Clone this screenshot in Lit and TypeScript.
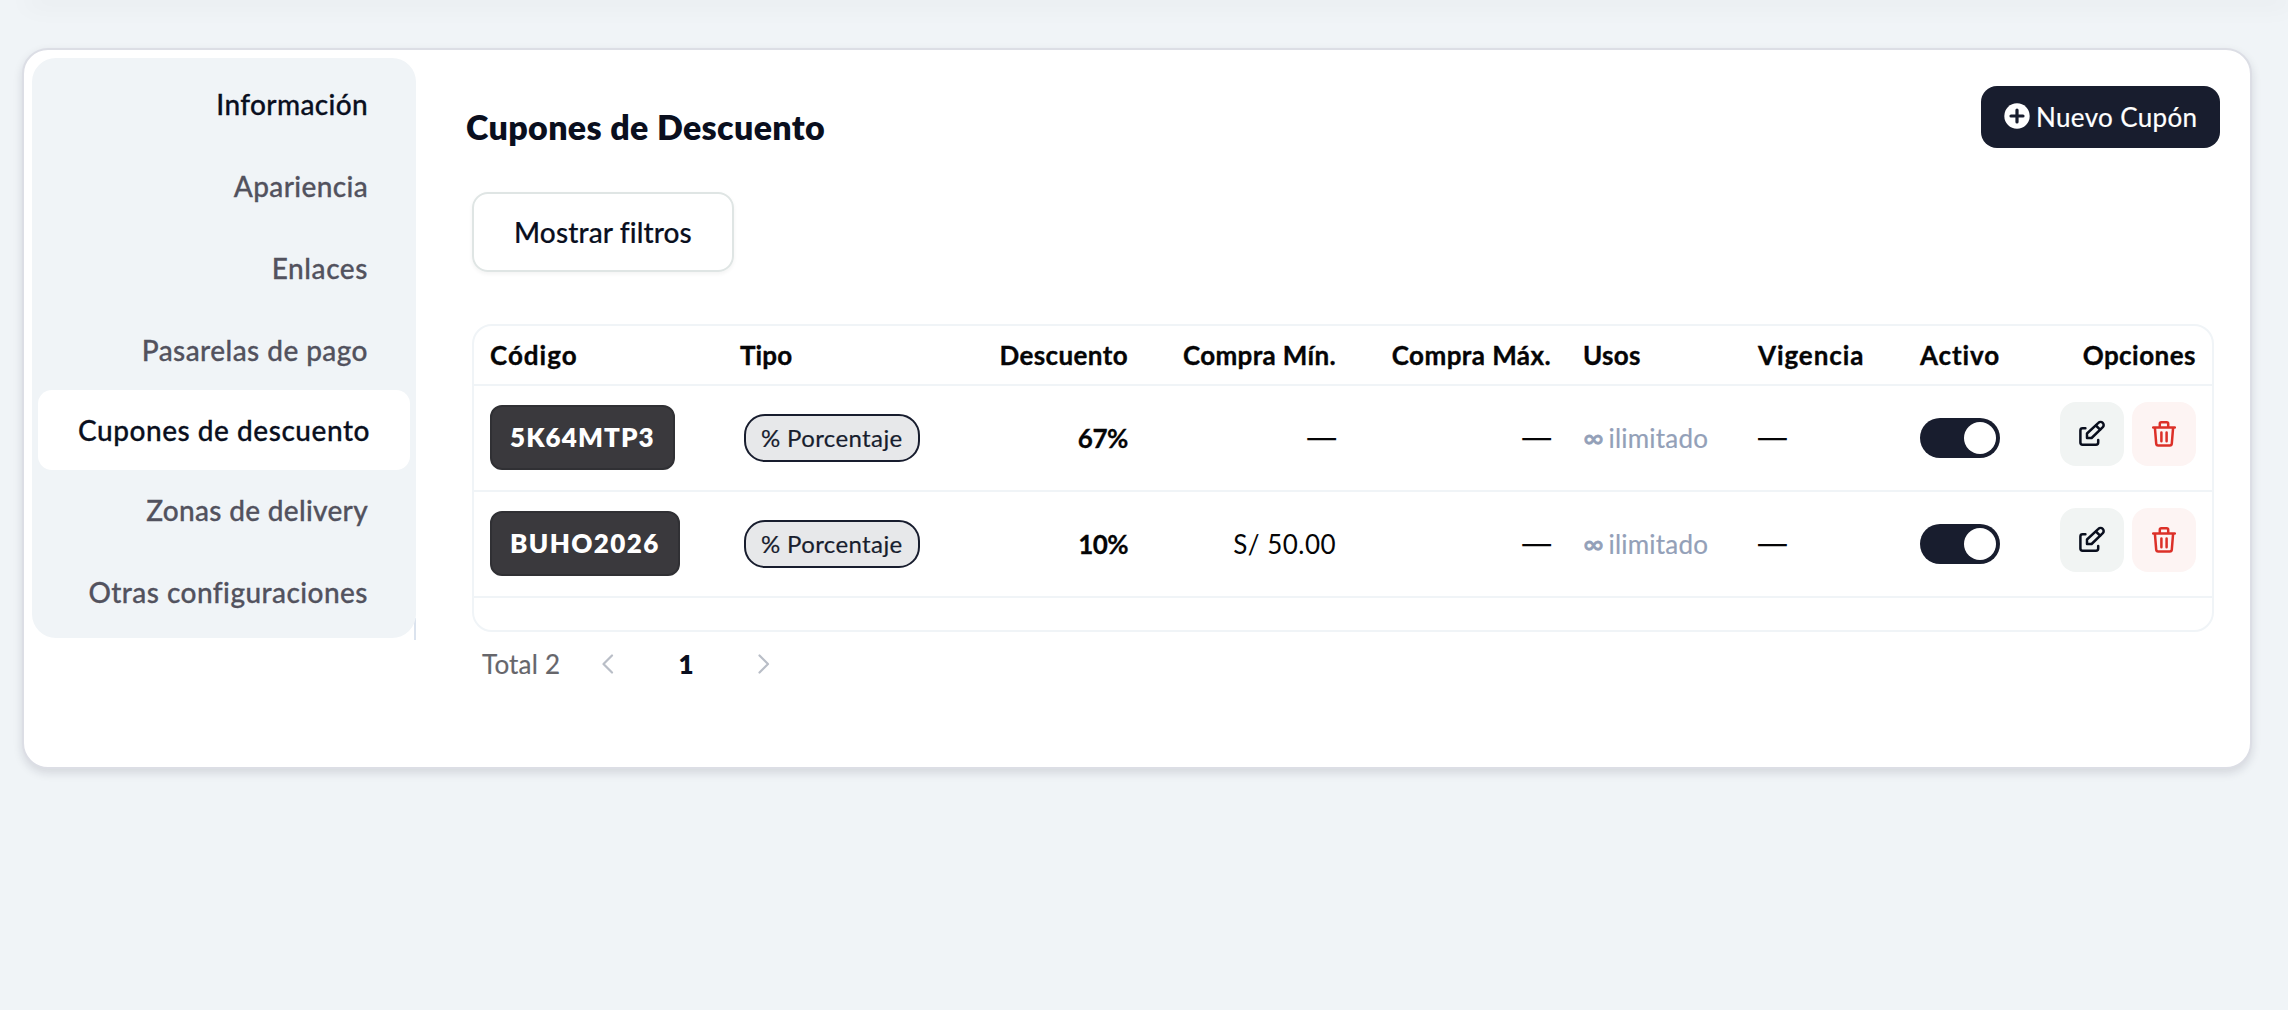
import { LitElement, html, css } from 'lit';
import { customElement, property } from 'lit/decorators.js';
import { classMap } from 'lit/directives/class-map.js';
import { styleMap } from 'lit/directives/style-map.js';

interface Label {
  text: string;
  /** Letter spacing in pixels. */
  track: number;
}

interface Coupon {
  code: Label;
  discount: Label;
  min?: string;
}

const label = ({ text, track }: Label) =>
  html`<span style=${styleMap({ letterSpacing: `${track}px` })}>${text}</span>`;

const NAV: Array<Label & { state?: 'strong' | 'active' }> = [
  { text: 'Información', track: 0.36, state: 'strong' },
  { text: 'Apariencia', track: 0.36 },
  { text: 'Enlaces', track: 0.57 },
  { text: 'Pasarelas de pago', track: 0.44 },
  { text: 'Cupones de descuento', track: 0.54, state: 'active' },
  { text: 'Zonas de delivery', track: 0.31 },
  { text: 'Otras configuraciones', track: 0.45 },
];

const COLUMNS: Array<Label & { right?: boolean }> = [
  { text: 'Código', track: 1.0 },
  { text: 'Tipo', track: 0.1 },
  { text: 'Descuento', track: 0.4, right: true },
  { text: 'Compra Mín.', track: 0.34, right: true },
  { text: 'Compra Máx.', track: 0.42, right: true },
  { text: 'Usos', track: 0.3 },
  { text: 'Vigencia', track: 0.9 },
  { text: 'Activo', track: 0.9 },
  { text: 'Opciones', track: 0.47, right: true },
];

const COUPONS: Coupon[] = [
  { code: { text: '5K64MTP3', track: 1.08 }, discount: { text: '67%', track: -0.4 } },
  { code: { text: 'BUHO2026', track: 1.4 }, discount: { text: '10%', track: -0.6 }, min: 'S/ 50.00' },
];

const editIcon = html`<svg class="icon" width="28" height="28" viewBox="0 0 28 28">
  <path d="M7.4 8.2H4.6a2.2 2.2 0 0 0-2.2 2.2v12.2a2.2 2.2 0 0 0 2.2 2.2h13.4a2.2 2.2 0 0 0 2.2-2.2v-2.6"/>
  <path d="M9 18v-4.500L20.400 2.900a3 3 0 0 1 4.400 4.300L13.600 18z"/>
  <path d="M17.900 5.500l4.200 4.100"/></svg>`;

const trashIcon = html`<svg class="icon" width="24" height="28" viewBox="0 0 24 28">
  <path d="M1.2 7.5h21.6M7.8 7V3.8A1.5 1.5 0 0 1 9.3 2.3h5.4a1.500 1.500 0 0 1 1.500 1.500V7M2.900 7.700l1.300 15.900a2 2 0 0 0 2 1.800h11.600a2 2 0 0 0 2-1.800l1.300-15.900M9.400 12.600v8.600M14.600 12.600v8.600"/></svg>`;

@customElement('coupon-table')
export class CouponTable extends LitElement {
  @property({ attribute: false }) coupons: Coupon[] = [];

  static styles = css`
    :host { display: block; color: #050506; font-size: 26px; }
    .table { border: 2px solid #f0f4f7; border-radius: 20px; height: 304px; }
    .row {
      display: grid; align-items: center; height: 104px; border-bottom: 2px solid #f0f4f7;
      grid-template-columns: 250px 200px 220px 208px 215px 175px 162px 126px 182px;
    }
    .head { height: 58px; font-weight: 700; -webkit-text-stroke: .35px; }
    .cell { padding: 0 16px; white-space: nowrap; }
    .right { text-align: right; }
    .bold { font-weight: 700; -webkit-text-stroke: .3px; }
    .code {
      display: flex; align-items: center; width: fit-content; height: 59px; margin-bottom: 1px; padding: 0 18px 2px;
      border: 2px solid #303034; border-radius: 12px; background: #3a393d; color: #fff; font-weight: 800;
    }
    .pill {
      display: flex; align-items: center; width: fit-content; height: 42px; margin-left: 4px; padding: 0 15px 2px;
      border: 2px solid #181d2e; border-radius: 21px; background: #e7e8ea; color: #181d2e;
      font-size: 24px; letter-spacing: .37px; -webkit-text-stroke: .2px;
    }
    .dash { font-family: Inter, sans-serif; font-size: 28.8px; line-height: 30px; }
    .price { letter-spacing: .48px; }
    .usage { color: #93a0b8; letter-spacing: .2px; -webkit-text-stroke: .2px; }
    .inf { margin-right: -2px; font-size: 28px; line-height: 30px; letter-spacing: 0; -webkit-text-stroke: .8px; }
    .toggle {
      display: flex; justify-content: flex-end; width: 72px; height: 32px; padding: 4px;
      border-radius: 20px; background: #181d2e;
    }
    .knob { width: 32px; height: 32px; border-radius: 50%; background: #fff; }
    .actions { display: flex; justify-content: flex-end; gap: 8px; padding-bottom: 8px; }
    .action {
      display: flex; align-items: center; justify-content: center; width: 64px; height: 64px;
      border-radius: 16px; background: #f1f4f3; color: #0a0f1e;
    }
    .danger { background: #fdf4f3; color: #dc3028; }
    .icon { fill: none; stroke: currentColor; stroke-width: 2.5; stroke-linecap: round; stroke-linejoin: round; }
  `;

  private dash() {
    return html`<span class="dash">—</span>`;
  }

  render() {
    return html`<div class="table">
      <div class="row head">
        ${COLUMNS.map((c) => html`<div class=${classMap({ cell: true, right: !!c.right })}>${label(c)}</div>`)}
      </div>
      ${this.coupons.map((c) => html`<div class="row">
        <div class="cell"><div class="code">${label(c.code)}</div></div>
        <div class="cell"><div class="pill">% Porcentaje</div></div>
        <div class="cell right bold">${label(c.discount)}</div>
        <div class="cell right">${c.min ? html`<span class="price">${c.min}</span>` : this.dash()}</div>
        <div class="cell right">${this.dash()}</div>
        <div class="cell usage"><span class="inf">∞</span> ilimitado</div>
        <div class="cell">${this.dash()}</div>
        <div class="cell"><div class="toggle"><div class="knob"></div></div></div>
        <div class="cell actions">
          <span class="action">${editIcon}</span>
          <span class="action danger">${trashIcon}</span>
        </div>
      </div>`)}
    </div>`;
  }
}

@customElement('app-root')
export class AppRoot extends LitElement {
  static styles = css`
    :host {
      display: block; height: 1010px; overflow: hidden; background: #f0f4f7;
      font-family: Lato, sans-serif; font-size: 28px; font-variant-ligatures: none; color: #0a0f1e;
    }
    .topshade { height: 0; box-shadow: 0 0 26px 4px rgba(15, 23, 32, .07); margin: 0 0 48px 30px; }
    .card {
      display: flex; align-items: flex-start; box-sizing: border-box; height: 721px; margin: 0 36px 0 22px;
      border: 2px solid #dcdee5; border-radius: 26px; background: #fff;
      box-shadow: 0 4px 10px rgba(20, 25, 45, .13);
    }
    .rail {
      flex: none; width: 384px; height: 582px; margin: 8px 0 0 8px;
      background: linear-gradient(#dbe3ee, #dbe3ee) 382px 560px / 2px 22px no-repeat;
    }
    .nav {
      box-sizing: border-box; height: 580px; padding: 4px 6px 0; border-radius: 24px; background: #f0f4f7;
      font-weight: 500; color: #52525e; -webkit-text-stroke: .3px;
    }
    .item {
      display: flex; align-items: center; justify-content: flex-end; box-sizing: border-box; height: 82px;
      padding: 1px 42px 0 0; white-space: nowrap;
    }
    .strong { color: #0a0f1e; }
    .active {
      height: 80px; margin-bottom: -2px; padding: 0 40px 0 0; border-radius: 14px; background: #fff; color: #0a0f1e;
    }
    .main { flex: 1; min-width: 0; padding: 36px 30px 0 50px; }
    .bar { display: flex; align-items: flex-start; justify-content: space-between; height: 106px; }
    .title { margin: 0; padding-top: 21px; font-size: 34px; line-height: 40px; font-weight: 800; letter-spacing: .34px; }
    .new {
      display: flex; align-items: center; box-sizing: border-box; width: 239px; height: 62px; padding: 0 0 0 23px;
      border-radius: 16px; background: #181d2e; color: #fff; font-size: 26px; letter-spacing: .36px; white-space: nowrap;
      -webkit-text-stroke: .2px;
    }
    .plus { margin: 0 6px 2px 0; }
    .filters {
      display: flex; align-items: center; justify-content: center; box-sizing: border-box; width: 262px; height: 80px;
      margin: 0 0 52px 6px; border: 2px solid #dfe5e4; border-radius: 16px;
      box-shadow: 0 2px 4px rgba(0, 0, 0, .05); font-weight: 500; letter-spacing: .12px; -webkit-text-stroke: .2px;
    }
    .list { margin: 0 6px; }
    .pages { display: flex; align-items: center; height: 63px; padding-left: 16px; font-size: 26px; }
    .total { width: 120px; color: #66666b; letter-spacing: .2px; -webkit-text-stroke: .2px; }
    .num { width: 144px; text-align: center; font-weight: 800; }
    .chev { fill: none; stroke: #b9bec7; stroke-width: 2.2; stroke-linecap: round; stroke-linejoin: round; }
  `;

  private chevron(d: string) {
    return html`<svg class="chev" width="12" height="20" viewBox="0 0 12 20"><path d=${d} /></svg>`;
  }

  render() {
    return html`
      <div class="topshade"></div>
      <div class="card">
        <div class="rail"><nav class="nav">
          ${NAV.map((n) => html`<div class=${classMap({ item: true, strong: n.state === 'strong', active: n.state === 'active' })}>${label(n)}</div>`)}
        </nav></div>
        <div class="main">
          <div class="bar">
            <h1 class="title">Cupones de Descuento</h1>
            <div class="new">
              <svg class="plus" width="26" height="26" viewBox="0 0 26 26">
                <circle cx="13" cy="13" r="12.7" fill="#fff" />
                <path d="M13 7v12M7 13h12" stroke="#181d2e" stroke-width="3.2" stroke-linecap="round" />
              </svg>
              <span>Nuevo Cupón</span>
            </div>
          </div>
          <div class="filters">Mostrar filtros</div>
          <coupon-table class="list" .coupons=${COUPONS}></coupon-table>
          <div class="pages">
            <span class="total">Total 2</span>
            ${this.chevron('M10 1.5L1.5 10l8.5 8.5')}
            <span class="num">1</span>
            ${this.chevron('M1.5 1.5L10 10l-8.5 8.5')}
          </div>
        </div>
      </div>`;
  }
}
